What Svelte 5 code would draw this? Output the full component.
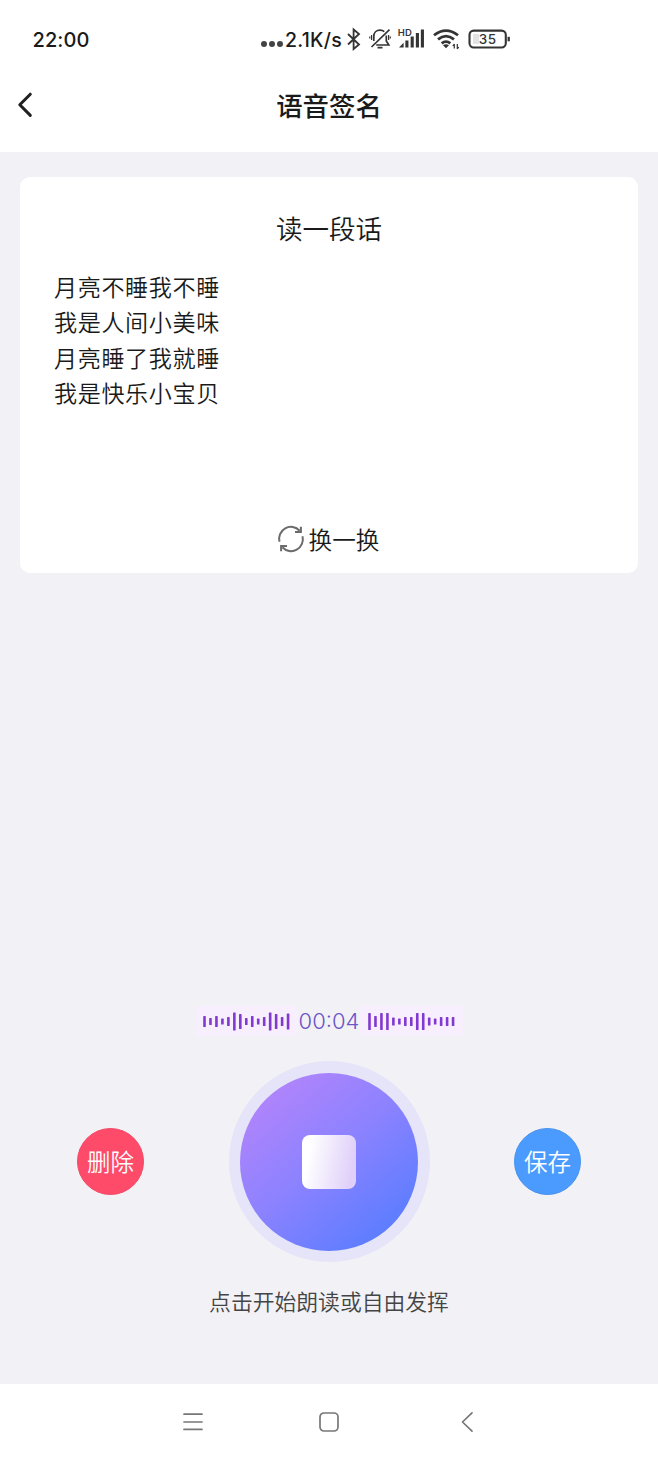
<script>
  const verse = ['月亮不睡我不睡', '我是人间小美味', '月亮睡了我就睡', '我是快乐小宝贝'];
  const leftWave = [11, 7, 11, 6, 9, 18, 15, 7, 11, 6, 9, 18, 15, 9, 16];
  const rightWave = [17, 11, 17, 17, 8, 6, 9, 9, 17, 17, 8, 6, 9, 9, 9];
</script>

{#snippet wave(bars)}
  <svg class="wave" width="103" height="30" viewBox="0 0 103 30">
    {#each bars as h, i}<rect x={8.2 + i * 5.97} y={15.6 - h / 2} width="2.6" height={h} rx="0.6" />{/each}
  </svg>
{/snippet}

<div class="screen">
  <div class="status">
    <span class="clock">22:00</span>
    <span class="dots"><i></i><i></i><i></i></span>
    <span class="speed">2.1K/s</span>
    <svg class="icons" width="170" height="30" viewBox="345 24 170 30" fill="none" stroke="#343434">
      <path d="M348 34 359 44.5 353.6 49V29.5L359 34 348 44.5" stroke-width="1.8" />
      <g stroke-width="1.7">
        <path d="M371.5 47 389.5 29.7" />
        <path d="M373.8 41V36.5C373.8 32.5 376.5 30.2 380 30.2c1.8 0 3.2.5 4.3 1.5M386.3 35.5V41l2.5 4H376.2M377.5 47.7h5" />
        <path d="M371.6 35v5M369.8 36.5v2M388.6 35v5M390.3 36.5v2" stroke-width="1.2" />
      </g>
      <g stroke-width="3.1">
        <path d="M406.9 47.4V40.5M412.2 47.4V36.5M417.4 47.4V33M422.4 47.4V29.6" />
        <path d="M399 47.4h4.6V42.7Z" fill="#343434" stroke="none" />
      </g>
      <text x="397.8" y="36.2" class="hd">HD</text>
      <g stroke-width="2.7">
        <path d="M434 35.3Q446 25.9 458 35.3M438 39.4Q446 32.9 454 39.4M441.7 43.4Q446 39.8 450.3 43.4" />
        <path d="M443 45.3Q446 43 449 45.3L446 48.2Z" fill="#343434" stroke="none" />
        <path d="M454.3 44v4.5M452.8 46l1.5-2M457.3 49v-5M458.8 47l-1.5 2" stroke-width="1.2" />
      </g>
      <rect x="473" y="34" width="6" height="10" fill="#e3e3e3" stroke="none" />
      <rect x="469.5" y="30.6" width="36.3" height="16.9" rx="4.2" stroke-width="2.1" />
      <path d="M508.7 36.8v4.5" stroke-width="2.3" />
      <text x="487.6" y="44.2" class="level">35</text>
    </svg>
  </div>
  <header>
    <svg class="back" width="20" height="28" viewBox="0 0 20 28"><path d="M14.3 3.2 3.8 13.8 14.3 24.4" fill="none" stroke="#202020" stroke-width="3" stroke-linecap="round" stroke-linejoin="round" /></svg>
    <h1>语音签名</h1>
  </header>

  <main>
    <section class="card">
      <h2>读一段话</h2>
      <div class="verse">{#each verse as line}<p>{line}</p>{/each}</div>
      <div class="swap">
        <svg width="28" height="28" viewBox="0 0 28 28" fill="none" stroke="#6b6b6b" stroke-width="2">
          <path d="M2.5 16.7A11.8 11.8 0 0 1 22.6 5.7M25.5 11.3A11.8 11.8 0 0 1 5.4 22.3" />
          <path d="M23.9 1.8V7H18M4.1 26.2V21H10" />
        </svg>
        <span>换一换</span>
      </div>
    </section>

    <div class="timer">
      {@render wave(leftWave)}
      <span class="time">00:04</span>
      {@render wave(rightWave)}
    </div>

    <div class="controls">
      <button class="small delete">删除</button>
      <button class="record" aria-label="停止"><span class="disc"><span class="stop"></span></span></button>
      <button class="small save">保存</button>
    </div>
    <p class="hint">点击开始朗读或自由发挥</p>
  </main>

  <nav>
    <svg width="20" height="20" viewBox="0 0 20 20"><path d="M1 2.2h18M1 10h18M1 17.4h18" /></svg>
    <svg class="home" width="22" height="22" viewBox="0 0 22 22"><rect x="2" y="2" width="18" height="18" rx="4" /></svg>
    <svg width="14" height="22" viewBox="0 0 14 22"><path d="M12 1.8 2.5 11 12 20.2" /></svg>
  </nav>
</div>

<style>
  :global(body) { background: #f2f1f6; }
  .screen { display: flex; flex-direction: column; width: 658px; height: 1462px; background: #f2f1f6; color: #1a1a1a; font-family: "Noto Sans CJK SC", sans-serif; font-weight: 350; }
  h1, h2, p { margin: 0; font-weight: inherit; }
  button { border: 0; padding: 0; font-family: inherit; font-weight: inherit; }

  .status { display: flex; align-items: center; height: 78px; flex: none; background: #fff; font: 500 20px/80px Inter, sans-serif; box-sizing: border-box; }
  .clock { width: 229px; padding: 2px 0 0 32.5px; box-sizing: border-box; letter-spacing: .1px; }
  .dots { display: flex; gap: 2px; width: 24px; margin-left: 32px; padding-top: 10px; }
  .dots i { width: 6px; height: 6px; border-radius: 50%; background: #444; }
  .speed { width: 60px; padding-top: 2px; font-size: 19.5px; letter-spacing: .25px; white-space: nowrap; }
  .hd { font: 600 9.5px Inter, sans-serif; fill: #343434; stroke: none; }
  .level { font: 500 13.5px Inter, sans-serif; fill: #343434; stroke: none; text-anchor: middle; letter-spacing: .4px; }

  header { display: grid; grid-template-columns: 48px 1fr 48px; align-items: center; height: 74px; flex: none; padding-bottom: 21px; box-sizing: border-box; background: #fff; }
  .back { margin-left: 16px; }
  h1 { text-align: center; font-size: 26.4px; line-height: 52px; font-weight: 500; }

  main { flex: 1; display: flex; flex-direction: column; align-items: center; padding-top: 25px; }
  .card { width: 618px; height: 396px; box-sizing: border-box; display: flex; flex-direction: column; background: #fff; border-radius: 10px; padding: 31px 34px 16px; }
  h2 { text-align: center; font-size: 26.5px; line-height: 40px; }
  .verse { margin-top: 21px; font-size: 23.1px; letter-spacing: .6px; line-height: 35.4px; }
  .swap { display: flex; justify-content: center; align-items: center; gap: 4px; height: 36px; margin-top: auto; padding-right: 2px; font-size: 23.6px; line-height: 36px; }

  .timer { display: flex; align-items: center; height: 30px; margin-top: 433px; }
  .wave { background: #f7effe; fill: #8139cf; }
  .time { width: 62px; text-align: center; font: 350 22px/30px Inter, sans-serif; color: #6b54c6; white-space: nowrap; }

  .controls { display: flex; align-items: center; justify-content: space-between; width: 504px; height: 201px; margin-top: 25px; }
  .small { width: 67px; height: 67px; border-radius: 50%; box-sizing: border-box; color: #fff; font-size: 23.5px; line-height: 65px; }
  .delete { background: #ff4b6a; border: 1px solid #f24864; }
  .save { background: #4b9bff; border: 1px solid #4691ee; }
  .record { display: grid; place-items: center; width: 201px; height: 201px; border-radius: 50%; background: #e5e4f8; }
  .disc { display: grid; place-items: center; width: 178px; height: 178px; border-radius: 50%; background: linear-gradient(140deg, #b384fb 10%, #8c82ff 48%, #5a7dff 88%); }
  .stop { width: 54px; height: 54px; border-radius: 8px; background: linear-gradient(100deg, #fff 15%, #dfcff9 90%); }
  .hint { margin-top: 21px; font-size: 21.8px; line-height: 36px; color: #444; }

  nav { display: flex; align-items: center; justify-content: space-between; height: 78px; flex: none; padding: 0 184px 2px 183px; box-sizing: border-box; background: #fff; }
  nav svg { fill: none; stroke: #777; stroke-width: 1.7; stroke-linecap: round; stroke-linejoin: round; }
  .home { margin-right: 6px; }
</style>
